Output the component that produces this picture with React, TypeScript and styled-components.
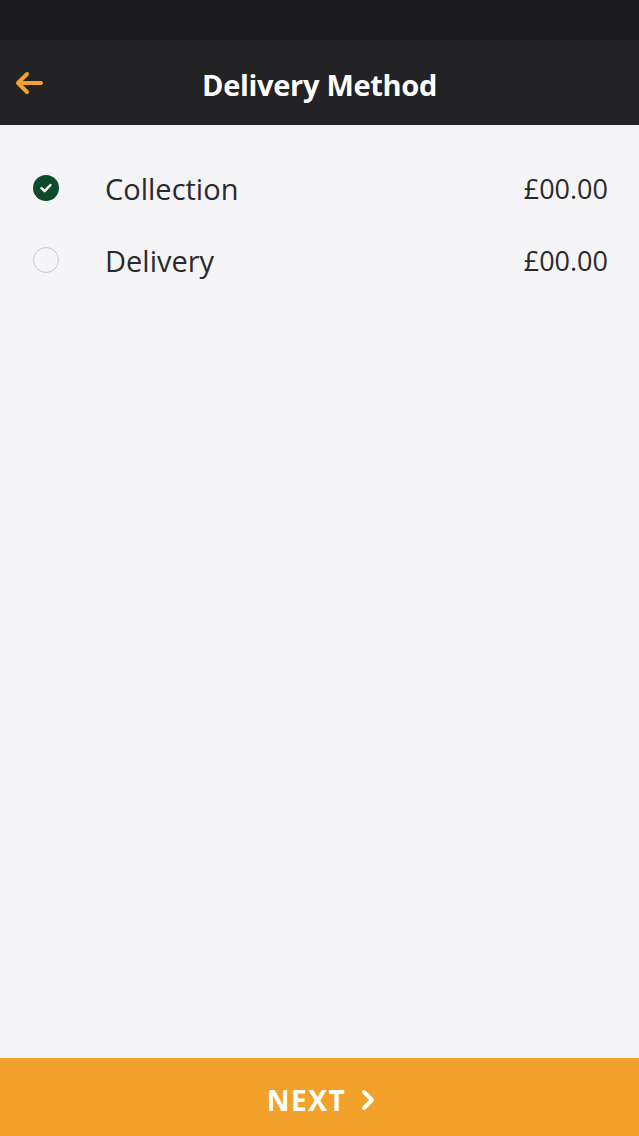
import styled, { createGlobalStyle } from "styled-components";

const GlobalStyle = createGlobalStyle`
  html, body {
    margin: 0;
    padding: 0;
    background: #f5f4f7;
  }
  body {
    font-family: "Open Sans", "Liberation Sans", sans-serif;
  }
`;

const options = [
  { label: "Collection", price: "£00.00", selected: true },
  { label: "Delivery", price: "£00.00", selected: false },
];

const App = () => {
  return (
    <>
      <GlobalStyle />
      <Screen>
        <StatusBar />
        <Header>
          <BackButton aria-label="back">
            <svg width="30" height="24" viewBox="0 0 30 24" fill="none">
              <path
                d="M27 12H4M13 3L4 12L13 21"
                stroke="#f2a22a"
                strokeWidth="4"
                strokeLinecap="round"
                strokeLinejoin="round"
              />
            </svg>
          </BackButton>
          <Title>Delivery Method</Title>
        </Header>
        <List>
          {options.map((o) => (
            <Row key={o.label}>
              <Radio $selected={o.selected}>
                {o.selected && (
                  <svg width="14" height="12" viewBox="0 0 14 12" fill="none">
                    <path
                      d="M2.5 6.2L5.6 9.2L11.5 3"
                      stroke="#fff"
                      strokeWidth="2.4"
                      strokeLinecap="round"
                      strokeLinejoin="round"
                    />
                  </svg>
                )}
              </Radio>
              <Label>{o.label}</Label>
              <Price>{o.price}</Price>
            </Row>
          ))}
        </List>
        <NextButton>
          NEXT
          <svg width="16" height="22" viewBox="0 0 16 22" fill="none">
            <path
              d="M4 3L12 11L4 19"
              stroke="#fff"
              strokeWidth="4"
              strokeLinecap="round"
              strokeLinejoin="round"
            />
          </svg>
        </NextButton>
      </Screen>
    </>
  );
};

const Screen = styled.div`
  display: flex;
  flex-direction: column;
  width: 639px;
  height: 1136px;
  background: #f5f4f7;
  overflow: hidden;
`;

const StatusBar = styled.div`
  height: 40px;
  background: #1a191c;
`;

const Header = styled.div`
  position: relative;
  display: flex;
  align-items: center;
  justify-content: center;
  box-sizing: border-box;
  height: 85px;
  padding-top: 3px;
  background: #232225;
`;

const BackButton = styled.button`
  position: absolute;
  left: 14px;
  top: 50%;
  transform: translateY(-50%);
  display: flex;
  padding: 0;
  border: none;
  background: none;
`;

const Title = styled.h1`
  margin: 0;
  color: #fff;
  font-size: 29px;
  font-weight: 700;
  letter-spacing: -0.3px;
`;

const List = styled.div`
  flex: 1;
  display: flex;
  flex-direction: column;
  padding: 27px 31px 0 33px;
`;

const Row = styled.div`
  display: flex;
  align-items: center;
  height: 72px;
`;

const Radio = styled.span<{ $selected: boolean }>`
  display: flex;
  align-items: center;
  justify-content: center;
  box-sizing: border-box;
  width: 26px;
  height: 26px;
  border-radius: 50%;
  background: ${(p) => (p.$selected ? "#0e4a2c" : "transparent")};
  border: ${(p) => (p.$selected ? "none" : "1.5px solid #c9c8cc")};
`;

const Label = styled.span`
  flex: 1;
  margin-left: 46px;
  color: #2a292c;
  font-size: 29px;
`;

const Price = styled.span`
  color: #2a292c;
  font-size: 27px;
`;

const NextButton = styled.button`
  display: flex;
  align-items: center;
  justify-content: center;
  gap: 14px;
  box-sizing: border-box;
  height: 78px;
  padding: 5px 0 0 4px;
  border: none;
  background: #f2a22a;
  color: #fff;
  font-family: "Open Sans", "Liberation Sans", sans-serif;
  font-size: 28px;
  font-weight: 700;
  letter-spacing: 1.5px;
`;

export default App;
